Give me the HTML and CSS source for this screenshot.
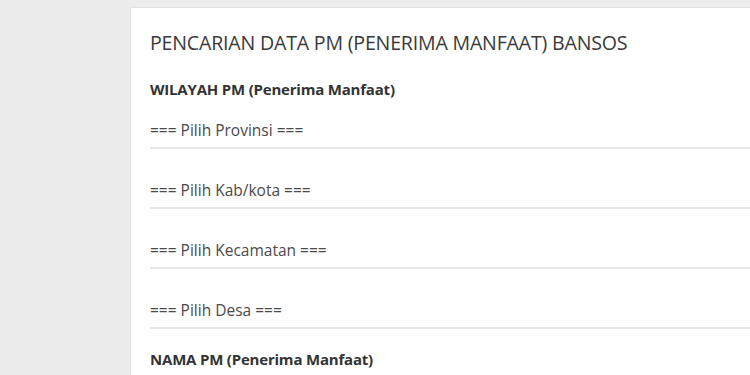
FILE: index.html
```html
<!DOCTYPE html>
<html lang="id">
<head>
    <meta charset="UTF-8">
    <meta name="viewport" content="width=device-width, initial-scale=1.0">
    <title>Pencarian Data PM Bansos</title>
    <link rel="stylesheet" href="styles.css">
</head>
<body>
    <div class="card">
        <h2 class="card-title">PENCARIAN DATA PM (PENERIMA MANFAAT) BANSOS</h2>

        <div class="section-label">WILAYAH PM (Penerima Manfaat)</div>

        <select class="region-select first">
            <option>=== Pilih Provinsi ===</option>
        </select>
        <select class="region-select">
            <option>=== Pilih Kab/kota ===</option>
        </select>
        <select class="region-select">
            <option>=== Pilih Kecamatan ===</option>
        </select>
        <select class="region-select">
            <option>=== Pilih Desa ===</option>
        </select>

        <div class="section-label name-label">NAMA PM (Penerima Manfaat)</div>
    </div>
</body>
</html>
```

FILE: styles.css
```css
body {
    margin: 0;
    padding: 7px 0 0 130px;
    background-color: #ececec;
    font-family: "Open Sans", "Noto Sans", sans-serif;
    color: #333;
    overflow: hidden;
    height: 375px;
    box-sizing: border-box;
}
.card {
    background-color: white;
    border-top: 1px solid #e2e2e2;
    border-left: 1px solid #e2e2e2;
    padding: 22px 0 0 19px;
    height: 100%;
    box-sizing: border-box;
}
.card-title {
    font-size: 19.6px;
    line-height: 26px;
    font-weight: 400;
    color: #3a3a3a;
    margin: 0;
    letter-spacing: -0.2px;
}
.section-label {
    font-size: 15px;
    line-height: 20px;
    font-weight: 700;
    color: #333;
    margin-top: 23px;
    letter-spacing: -0.2px;
}
.name-label {
    margin-top: 20px;
}
.region-select {
    display: block;
    width: 100%;
    height: auto;
    appearance: none;
    -webkit-appearance: none;
    border: none;
    border-radius: 0;
    border-bottom: 2px solid #e6e6e6; /* light underline */
    background: white;
    font-family: inherit;
    font-size: 15.5px;
    line-height: 20px;
    color: #4a4a4a;
    padding: 8px 0 7px 0;
    margin-top: 23px;
    outline: none;
}
.region-select.first {
    margin-top: 13px;
}
```
